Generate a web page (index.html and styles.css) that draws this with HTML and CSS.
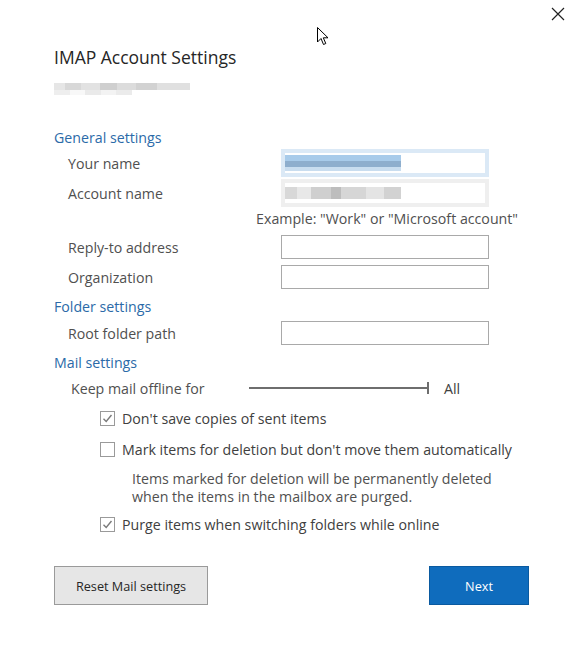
FILE: index.html
```html
<!DOCTYPE html>
<html>
<head>
<meta charset="utf-8">
<link rel="stylesheet" href="styles.css">
</head>
<body>
<div class="dialog">
  <div class="close" aria-label="Close">
    <svg width="14" height="14" viewBox="0 0 14 14"><path d="M1 1 L13 13 M13 1 L1 13" stroke="#222" stroke-width="1.2" fill="none"/></svg>
  </div>
  <div class="cursor">
    <svg width="14" height="20" viewBox="0 0 14 20"><path d="M0.5 0.5 L0.5 15 L4 11.5 L6.5 17.5 L8.8 16.5 L6.3 10.8 L11 10.8 Z" fill="#fff" stroke="#000" stroke-width="1"/></svg>
  </div>

  <h1 class="title">IMAP Account Settings</h1>
  <div class="email-blur"><span class="b1"></span><span class="b2"></span></div>

  <div class="section-head first">General settings</div>
  <div class="row">
    <span class="label">Your name</span>
    <div class="field blurred-blue"><span class="blur-text blue"></span></div>
  </div>
  <div class="row">
    <span class="label">Account name</span>
    <div class="field blurred-gray"><span class="blur-text gray"></span></div>
  </div>
  <div class="example">Example: "Work" or "Microsoft account"</div>
  <div class="row">
    <span class="label">Reply-to address</span>
    <div class="field input"></div>
  </div>
  <div class="row">
    <span class="label">Organization</span>
    <div class="field input"></div>
  </div>

  <div class="section-head folder">Folder settings</div>
  <div class="row root">
    <span class="label">Root folder path</span>
    <div class="field input"></div>
  </div>

  <div class="section-head mail">Mail settings</div>
  <div class="keep">
    <span class="keep-label">Keep mail offline for</span>
    <span class="slider"><span class="track"></span><span class="tick"></span></span>
    <span class="all">All</span>
  </div>

  <div class="checks">
    <label class="check"><span class="box checked"><svg width="13" height="13" viewBox="0 0 13 13"><path d="M2.5 6.8 L5.2 9.5 L10.5 3" stroke="#7a7a7a" stroke-width="1.4" fill="none"/></svg></span>Don't save copies of sent items</label>
    <label class="check"><span class="box"></span>Mark items for deletion but don't move them automatically</label>
    <p class="desc">Items marked for deletion will be permanently deleted<br>when the items in the mailbox are purged.</p>
    <label class="check"><span class="box checked"><svg width="13" height="13" viewBox="0 0 13 13"><path d="M2.5 6.8 L5.2 9.5 L10.5 3" stroke="#7a7a7a" stroke-width="1.4" fill="none"/></svg></span>Purge items when switching folders while online</label>
  </div>

  <div class="buttons">
    <button class="btn secondary">Reset Mail settings</button>
    <button class="btn primary">Next</button>
  </div>
</div>
</body>
</html>
```
FILE: styles.css
```css
html, body {
  margin: 0;
  padding: 0;
  background: #fff;
}
body {
  font-family: "Open Sans", "Noto Sans", sans-serif;
  font-size: 14.2px;
  color: #505050;
}
.dialog {
  position: relative;
  width: 583px;
  height: 660px;
  box-sizing: border-box;
  padding: 45px 0 0 54px;
}
.close {
  position: absolute;
  left: 551px;
  top: 7px;
  width: 14px;
  height: 14px;
}
.close svg { display: block; }
.cursor {
  position: absolute;
  left: 317px;
  top: 27px;
}
.cursor svg { display: block; }
.title {
  margin: 0;
  font-size: 17.5px;
  font-weight: 400;
  line-height: 24px;
  color: #262626;
}
.email-blur {
  margin-top: 14px;
  height: 12px;
  position: relative;
  width: 140px;
}
.email-blur .b1 {
  position: absolute;
  left: 0; top: 0;
  width: 136px; height: 7px;
  background: linear-gradient(90deg, #e6e6e6 0 8%, #d8d8d8 8% 20%, #e2e2e2 20% 34%, #cfcfcf 34% 46%, #dcdcdc 46% 60%, #d2d2d2 60% 76%, #e0e0e0 76% 100%);
}
.email-blur .b2 {
  position: absolute;
  left: 0; top: 7px;
  width: 78px; height: 5px;
  background: linear-gradient(90deg, #eeeeee 0 20%, #f8f8f8 20% 40%, #eaeaea 40% 60%, #f3f3f3 60% 80%, #ebebeb 80% 100%);
}
.section-head {
  color: #2b6aa8;
  font-size: 14.2px;
  line-height: 20px;
}
.section-head.first { margin-top: 33px; }
.section-head.folder { height: 26px; line-height: 29px; }
.section-head.mail { height: 28px; line-height: 30px; }
.row {
  display: grid;
  grid-template-columns: 227px 208px;
  align-items: center;
  height: 30px;
}
.label {
  padding-left: 14px;
}
.field {
  box-sizing: border-box;
  position: relative;
}
.field.input {
  height: 24px;
  border: 1px solid #a9a9a9;
  background: #fff;
}
.blurred-blue {
  height: 28px;
  background: #fff;
  border: 4px solid #dbe9f6;
}
.blurred-gray {
  height: 28px;
  background: #fff;
  border: 4px solid #efefef;
}
.blur-text {
  position: absolute;
  left: 0;
  top: 2px;
  width: 116px;
  height: 16px;
}
.blur-text.blue {
  background: linear-gradient(180deg, #a8cbea 0 40%, #8eaecd 40% 75%, #c9ddef 75% 100%);
  filter: blur(0.6px);
}
.blur-text.gray {
  background: linear-gradient(90deg, #d8d8d8 0 10%, #e8e8e8 10% 22%, #cfcfcf 22% 40%, #bdbdbd 40% 48%, #d6d6d6 48% 70%, #e4e4e4 70% 85%, #d2d2d2 85% 100%);
  height: 12px;
  top: 4px;
  filter: blur(0.6px);
}
.example {
  height: 24px;
  line-height: 22px;
  text-align: right;
  width: 464px;
  color: #505050;
}
.keep {
  display: flex;
  align-items: center;
  height: 24px;
  padding-left: 17px;
}
.keep-label {
  width: 178px;
}
.slider {
  position: relative;
  width: 180px;
  height: 12px;
  display: inline-block;
}
.slider .track {
  position: absolute;
  left: 0; right: 0;
  top: 5px;
  height: 2px;
  background: #6e6e6e;
}
.slider .tick {
  position: absolute;
  right: 0;
  top: 0;
  width: 2px;
  height: 12px;
  background: #6e6e6e;
}
.all {
  margin-left: 15px;
  color: #404040;
}
.checks {
  margin-top: 6px;
  padding-left: 46px;
  display: flex;
  flex-direction: column;
}
.check {
  display: flex;
  align-items: center;
  height: 24px;
  margin-bottom: 7px;
  color: #404040;
}
.box {
  width: 15px;
  height: 15px;
  box-sizing: border-box;
  border: 1px solid #9a9a9a;
  margin-right: 7px;
  display: flex;
  align-items: center;
  justify-content: center;
  flex: none;
}
.box svg { display: block; }
.desc {
  margin: 2px 0 6px 32px;
  line-height: 18px;
  color: #505050;
}
.buttons {
  margin-top: 23px;
  display: flex;
  justify-content: space-between;
  width: 475px;
}
.btn {
  font-family: inherit;
  font-size: 12.7px;
  height: 39px;
  box-sizing: border-box;
  cursor: default;
}
.btn.secondary {
  width: 154px;
  background: #e6e6e6;
  border: 1px solid #9a9a9a;
  color: #262626;
}
.btn.primary {
  width: 100px;
  background: #0f6cbd;
  border: 1px solid #0a5aa0;
  color: #fff;
}
```
